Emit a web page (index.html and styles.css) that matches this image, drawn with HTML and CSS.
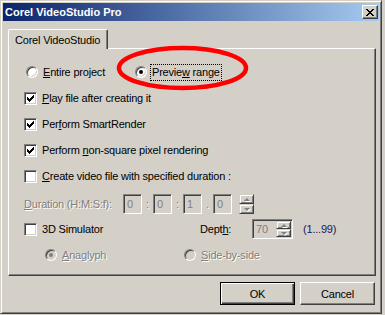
FILE: index.html
```html
<!DOCTYPE html>
<html>
<head>
<meta charset="utf-8">
<link rel="stylesheet" href="styles.css">
</head>
<body>
<div class="window">
  <div class="titlebar">
    <span class="title">Corel VideoStudio Pro</span>
    <span class="close"><svg width="8" height="7" viewBox="0 0 8 7" shape-rendering="crispEdges"><path d="M0 0h2v1H0zM6 0h2v1H6zM1 1h2v1H1zM5 1h2v1H5zM2 2h4v1H2zM3 3h2v1H3zM2 4h4v1H2zM1 5h2v1H1zM5 5h2v1H5zM0 6h2v1H0zM6 6h2v1H6z" fill="#000"/></svg></span>
  </div>
  <div class="tabs"><div class="tab">Corel VideoStudio</div></div>
  <div class="panel">
    <div class="row r1">
      <div class="opt first"><span class="radio"></span><span class="lbl"><u>E</u>ntire project</span></div>
      <div class="opt"><span class="radio on"></span><span class="lbl focus">Previe<u>w</u> range</span></div>
    </div>
    <div class="row r2"><span class="cb"><svg width="11" height="11" viewBox="1 1 11 11" shape-rendering="crispEdges"><path class="chk" d="M3 5h1v1h1v1h1V6h1V5h1V4h1V3h1v3H9v1H8v1H7v1H6v1H5V9H4V8H3z"/></svg></span><span class="lbl"><u>P</u>lay file after creating it</span></div>
    <div class="row r3"><span class="cb"><svg width="11" height="11" viewBox="1 1 11 11" shape-rendering="crispEdges"><path class="chk" d="M3 5h1v1h1v1h1V6h1V5h1V4h1V3h1v3H9v1H8v1H7v1H6v1H5V9H4V8H3z"/></svg></span><span class="lbl">Per<u>f</u>orm SmartRender</span></div>
    <div class="row r4"><span class="cb"><svg width="11" height="11" viewBox="1 1 11 11" shape-rendering="crispEdges"><path class="chk" d="M3 5h1v1h1v1h1V6h1V5h1V4h1V3h1v3H9v1H8v1H7v1H6v1H5V9H4V8H3z"/></svg></span><span class="lbl">Perform <u>n</u>on-square pixel rendering</span></div>
    <div class="row r5"><span class="cb"></span><span class="lbl"><u>C</u>reate video file with specified duration :</span></div>
    <div class="row r6">
      <span class="dlabel dis"><u>D</u>uration (H:M:S:f):</span>
      <span class="edit">0</span><span class="sep dis">:</span>
      <span class="edit">0</span><span class="sep dis">:</span>
      <span class="edit">1</span><span class="sep dis">.</span>
      <span class="edit">0</span>
      <span class="spin"><span class="sb"><i class="up"></i></span><span class="sb"><i class="dn"></i></span></span>
    </div>
    <div class="row r7">
      <div class="opt sim"><span class="cb"></span><span class="lbl">3D Simulator</span></div>
      <span class="depth">Dept<u>h</u>:</span>
      <span class="edit wide">70<span class="spin inner"><span class="sb"><i class="up"></i></span><span class="sb"><i class="dn"></i></span></span></span>
      <span class="range">(1...99)</span>
    </div>
    <div class="row r8">
      <div class="opt ana"><span class="radio dr on"></span><span class="lbl dis"><u>A</u>naglyph</span></div>
      <div class="opt"><span class="radio dr"></span><span class="lbl dis"><u>S</u>ide-by-side</span></div>
    </div>
  </div>
  <div class="buttons">
    <button class="btn def">OK</button>
    <button class="btn">Cancel</button>
  </div>
  <svg class="annot" width="385" height="315" viewBox="0 0 385 315"><ellipse cx="182.5" cy="68" rx="63.5" ry="20" fill="none" stroke="#ff0000" stroke-width="4.5"/></svg>
</div>
</body>
</html>
```
FILE: styles.css
```css
* { box-sizing: border-box; }
html, body { margin: 0; padding: 0; }
body {
  width: 385px; height: 315px; overflow: hidden;
  background: #d4d0c8;
  font: 11px "Liberation Sans", Arial, sans-serif;
  letter-spacing: -0.2px;
  color: #000;
}
u { text-decoration: underline; text-underline-offset: 1px; }
.window {
  position: relative;
  width: 382px; height: 314px;
  border: 1px solid; border-color: #d4d0c8 #404040 #404040 #d4d0c8;
  box-shadow: inset 1px 1px #fff, inset -1px -1px #808080;
  padding: 2px;
  display: flex; flex-direction: column;
}
.titlebar {
  height: 18px;
  background: linear-gradient(to right, #0a246a, #a6caf0);
  display: flex; align-items: center; justify-content: space-between;
  padding: 0 1px 0 2px;
  color: #fff; font-weight: bold; font-size: 11px; letter-spacing: 0;
}
.close {
  width: 16px; height: 14px; display: flex; align-items: center; justify-content: center;
  background: #d4d0c8;
  border: 1px solid; border-color: #fff #404040 #404040 #fff;
  box-shadow: inset -1px -1px #808080;
  padding-right: 1px;
}
.close svg { display: block; }
.tabs { display: flex; margin: 8px 0 0 5px; height: 19px; }
.tab {
  position: relative; z-index: 1;
  height: 20px; padding: 0 7px 0 6px;
  display: flex; align-items: center;
  background: #d4d0c8;
  border: 1px solid; border-color: #fff #404040 transparent #fff; border-bottom: 0;
  border-top-left-radius: 2px; border-top-right-radius: 2px;
  box-shadow: inset -1px 0 #808080;
}
.panel {
  margin-left: 5px; width: 368px; height: 228px;
  border: 1px solid; border-color: #fff #404040 #404040 #fff;
  box-shadow: inset -1px -1px #808080;
  padding: 15px 0 0 15px;
  display: flex; flex-direction: column;
}
.row { display: flex; align-items: center; height: 16px; }
.r2, .r3, .r4, .r5, .r6 { margin-top: 10px; }
.r6 { height: 20px; }
.r7 { height: 20px; margin-top: 5px; }
.r8 { margin-top: 8px; }
.opt { display: flex; align-items: center; }
.first { width: 109px; }
.sim { width: 176px; }
.ana { width: 139px; margin-left: 19px; }
.lbl { margin-left: 5px; white-space: nowrap; }
.focus { border: 1px dotted #000; padding: 0 1px; margin-left: 3px; line-height: 15px; }
.radio {
  width: 12px; height: 12px; border-radius: 50%;
  margin-left: 2px;
  border: 1px solid; border-color: #808080 #fff #fff #808080;
  background: #fff;
  box-shadow: inset 1px 1px #404040, inset -1px -1px #d4d0c8;
  display: flex; align-items: center; justify-content: center;
}
.radio.on::after { content: ""; width: 4px; height: 4px; border-radius: 50%; background: #000; }
.radio.dr { background: #d4d0c8; }
.radio.dr.on::after { background: #808080; }
.cb {
  width: 13px; height: 13px; flex: none;
  border: 1px solid; border-color: #808080 #fff #fff #808080;
  background: #fff;
  box-shadow: inset 1px 1px #404040, inset -1px -1px #d4d0c8;
}
.cb svg { display: block; }
.chk { fill: #000; }
.dis { color: #808080; text-shadow: 1px 1px 0 #fff; }
.dlabel { width: 99px; white-space: nowrap; }
.edit {
  position: relative;
  width: 19px; height: 20px; flex: none;
  border: 1px solid; border-color: #808080 #fff #fff #808080;
  box-shadow: inset 1px 1px #404040, inset -1px -1px #d4d0c8;
  color: #808080; padding: 2px 0 0 3px; line-height: 14px;
  display: flex;
}
.edit.wide { width: 41px; }
.sep { width: 11px; text-align: center; }
.spin { display: flex; flex-direction: column; width: 15px; height: 20px; margin-left: 7px; }
.spin.inner { margin-left: auto; height: 16px; margin-top: -1px; margin-right: 1px; }
.sb {
  flex: 1; display: flex; align-items: center; justify-content: center;
  background: #d4d0c8;
  border: 1px solid; border-color: #d4d0c8 #404040 #404040 #d4d0c8;
  box-shadow: inset 1px 1px #fff, inset -1px -1px #808080;
}
.sb i { width: 0; height: 0; border-left: 3px solid transparent; border-right: 3px solid transparent; filter: drop-shadow(1px 1px 0 #fff); }
.sb i.up { border-bottom: 3px solid #808080; }
.sb i.dn { border-top: 3px solid #808080; }
.depth { width: 52px; white-space: nowrap; }
.range { margin-left: 10px; color: #1c1660; }
.buttons { display: flex; justify-content: flex-end; gap: 5px; padding: 6px 4px 0 0; }
.btn {
  width: 75px; height: 23px;
  font: 11px "Liberation Sans", Arial, sans-serif; color: #000; letter-spacing: -0.2px;
  background: #d4d0c8;
  border: 1px solid; border-color: #fff #404040 #404040 #fff;
  box-shadow: inset -1px -1px #808080;
  padding: 0; margin: 0;
}
.btn.def {
  border-color: #000;
  box-shadow: inset 1px 1px #fff, inset -1px -1px #404040, inset -2px -2px #808080;
}
.annot { position: absolute; left: -1px; top: -1px; pointer-events: none; }
```
